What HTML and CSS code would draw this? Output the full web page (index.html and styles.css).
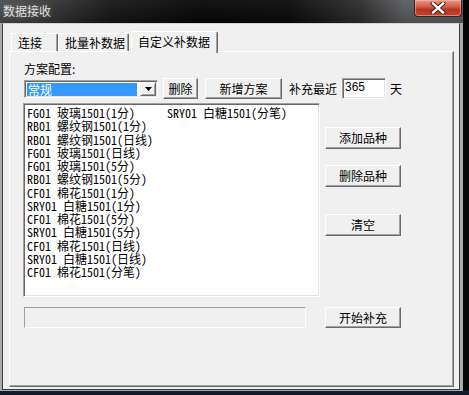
FILE: index.html
```html
<!DOCTYPE html>
<html lang="zh">
<head>
<meta charset="utf-8">
<title>数据接收</title>
<link rel="stylesheet" href="styles.css">
</head>
<body>
<div class="window">
  <div class="titlebar">
    <span class="title">数据接收</span>
    <div class="close">
      <svg width="16" height="12" viewBox="0 0 16 12">
        <path d="M3 1.5 L13 10.5 M13 1.5 L3 10.5" stroke="#3a1a14" stroke-width="4.2" stroke-linecap="square" fill="none"/>
        <path d="M3 1.5 L13 10.5 M13 1.5 L3 10.5" stroke="#ffffff" stroke-width="2.4" stroke-linecap="square" fill="none"/>
      </svg>
    </div>
  </div>
  <div class="client">
    <div class="tabs">
      <div class="tab tab-connect">连接</div>
      <div class="tab tab-batch">批量补数据</div>
      <div class="tab tab-custom active">自定义补数据</div>
    </div>
    <div class="panel">
      <div class="label">方案配置:</div>
      <div class="scheme-row">
        <div class="combo">
          <span class="combo-value">常规</span>
          <span class="combo-arrow">
            <svg width="7" height="4" viewBox="0 0 7 4"><path d="M0 0 H7 L3.5 4 Z" fill="#000"/></svg>
          </span>
        </div>
        <button class="btn btn-del">删除</button>
        <button class="btn btn-new">新增方案</button>
        <span class="text recent">补充最近</span>
        <div class="input">365</div>
        <span class="text day">天</span>
      </div>
      <div class="main">
        <div class="listbox">
          <div class="col">
            <div class="item">FG01 玻璃1501(1分)</div>
            <div class="item">RB01 螺纹钢1501(1分)</div>
            <div class="item">RB01 螺纹钢1501(日线)</div>
            <div class="item">FG01 玻璃1501(日线)</div>
            <div class="item">FG01 玻璃1501(5分)</div>
            <div class="item">RB01 螺纹钢1501(5分)</div>
            <div class="item">CF01 棉花1501(1分)</div>
            <div class="item">SRY01 白糖1501(1分)</div>
            <div class="item">CF01 棉花1501(5分)</div>
            <div class="item">SRY01 白糖1501(5分)</div>
            <div class="item">CF01 棉花1501(日线)</div>
            <div class="item">SRY01 白糖1501(日线)</div>
            <div class="item">CF01 棉花1501(分笔)</div>
          </div>
          <div class="col">
            <div class="item">SRY01 白糖1501(分笔)</div>
          </div>
        </div>
        <div class="side">
          <button class="btn side-btn add">添加品种</button>
          <button class="btn side-btn remove">删除品种</button>
          <button class="btn side-btn clear">清空</button>
        </div>
      </div>
      <div class="bottom">
        <div class="progress"></div>
        <button class="btn start">开始补充</button>
      </div>
    </div>
  </div>
</div>
</body>
</html>
```
FILE: styles.css
```css
* { box-sizing: border-box; }
html, body { margin: 0; padding: 0; }
body {
  width: 469px;
  height: 395px;
  overflow: hidden;
  background: linear-gradient(to bottom, #060606 0, #060606 390px, #142033 391px, #0d1624 395px);
  font-family: "Noto Sans Mono CJK SC", "Noto Sans CJK SC", sans-serif;
  font-size: 12px;
  color: #000;
}
.window {
  width: 463px;
  height: 391px;
  background: #a9abae;
  display: flex;
  flex-direction: column;
}
.titlebar {
  height: 23px;
  flex: none;
  display: flex;
  justify-content: space-between;
  align-items: flex-start;
  background:
    linear-gradient(to bottom, rgba(255,255,255,0.06), rgba(0,0,0,0.15)),
    linear-gradient(to right, #4a4b4d 0, #3a3a3b 40px, #161617 110px, #060606 200px, #0a0a0a 290px, #2c2c2d 360px, #5a5b5d 405px, #5a5b5d 463px);
}
.title {
  padding: 4px 0 0 3px;
  color: #e2e2e2;
  font-family: "Noto Sans CJK SC", sans-serif;
  font-size: 12px;
  line-height: 14px;
  text-shadow: 0 0 6px rgba(255,255,255,0.25);
}
.close {
  width: 48px;
  height: 17px;
  margin-right: 1px;
  border: 1px solid #3b2320;
  border-top: none;
  border-radius: 0 0 4px 4px;
  background: linear-gradient(to bottom, #e59a88 0, #d4604a 40%, #b8321e 60%, #c9462e 100%);
  box-shadow: inset 0 0 0 1px rgba(255,200,190,0.45);
  display: flex;
  align-items: center;
  justify-content: center;
}
.client {
  margin-left: 2px;
  width: 458px;
  height: 367px;
  flex: none;
  background: #f0f0f0;
  border: 1px solid #3c3c3c;
  border-top-color: #d4d4d4;
}
.tabs {
  height: 27px;
  padding: 7px 0 0 8px;
  display: flex;
  align-items: flex-end;
}
.tab {
  height: 18px;
  padding: 2px 0 0 6px;
  line-height: 14px;
  font-family: "Noto Sans CJK SC", sans-serif;
  border-top: 1px solid #ffffff;
  border-left: 1px solid #ffffff;
  border-right: 1px solid #696969;
  box-shadow: inset -1px 0 0 #a0a0a0;
  border-radius: 2px 2px 0 0;
  background: #f0f0f0;
}
.tab-connect { width: 47px; }
.tab-batch { width: 71px; }
.tab-custom {
  width: 87px;
  height: 22px;
  margin-left: 2px;
  margin-bottom: -2px;
  padding-top: 3px;
  position: relative;
  z-index: 1;
}
.panel {
  margin-left: 6px;
  width: 445px;
  height: 336px;
  border-top: 1px solid #ffffff;
  border-left: 1px solid #ffffff;
  border-right: 1px solid #696969;
  border-bottom: 1px solid #696969;
  box-shadow: inset -1px -1px 0 #a0a0a0;
  padding: 10px 0 0 14px;
}
.label, .text {
  font-family: "Noto Sans CJK SC", sans-serif;
  line-height: 14px;
}
.scheme-row {
  margin-top: 2px;
  height: 21px;
  display: flex;
  align-items: center;
}
.combo {
  width: 134px;
  height: 18px;
  background: #fff;
  border-top: 1px solid #a0a0a0;
  border-left: 1px solid #a0a0a0;
  border-right: 1px solid #ffffff;
  border-bottom: 1px solid #ffffff;
  box-shadow: inset 1px 1px 0 #696969, inset -1px -1px 0 #e3e3e3;
  padding: 2px 1px 1px 2px;
  display: flex;
  align-items: stretch;
}
.combo-value {
  width: 112px;
  background: #3399ff;
  color: #fff;
  font-family: "Noto Sans CJK SC", sans-serif;
  line-height: 13px;
  padding-left: 1px;
}
.combo-arrow {
  margin-left: 3px;
  margin-top: -1px;
  width: 16px;
  background: #f0f0f0;
  border-top: 1px solid #f0f0f0;
  border-left: 1px solid #f0f0f0;
  border-right: 1px solid #696969;
  border-bottom: 1px solid #696969;
  box-shadow: inset 1px 1px 0 #fff, inset -1px -1px 0 #a0a0a0;
  display: flex;
  align-items: center;
  justify-content: center;
}
.btn {
  margin: 0;
  padding: 0;
  height: 21px;
  background: #f0f0f0;
  border-top: 1px solid #ffffff;
  border-left: 1px solid #ffffff;
  border-right: 1px solid #696969;
  border-bottom: 1px solid #696969;
  box-shadow: inset -1px -1px 0 #a0a0a0;
  font-family: "Noto Sans CJK SC", sans-serif;
  font-size: 12px;
  line-height: 14px;
  color: #000;
  border-radius: 0;
}
.btn-del { margin-left: 5px; width: 35px; }
.btn-new { margin-left: 7px; width: 77px; }
.recent { margin-left: 7px; }
.input {
  margin-left: 5px;
  width: 44px;
  height: 21px;
  background: #fff;
  border-top: 1px solid #a0a0a0;
  border-left: 1px solid #a0a0a0;
  border-right: 1px solid #ffffff;
  border-bottom: 1px solid #ffffff;
  box-shadow: inset 1px 1px 0 #696969, inset -1px -1px 0 #e3e3e3;
  font-family: "Liberation Sans", sans-serif;
  font-size: 12px;
  line-height: 17px;
  padding-left: 2px;
}
.day { margin-left: 4px; }
.main {
  margin-top: 4px;
  display: flex;
  align-items: flex-start;
}
.listbox {
  margin-left: -1px;
  width: 297px;
  height: 194px;
  background: #fff;
  border-top: 1px solid #a0a0a0;
  border-left: 1px solid #a0a0a0;
  border-right: 1px solid #ffffff;
  border-bottom: 1px solid #ffffff;
  box-shadow: inset 1px 1px 0 #696969, inset -1px -1px 0 #e3e3e3;
  padding: 2px 0 0 3px;
  display: flex;
}
.col { width: 140px; }
.item {
  height: 13.25px;
  line-height: 13px;
  white-space: nowrap;
  font-size: 12px;
}
.side {
  margin-left: 5px;
  padding-top: 24px;
  display: flex;
  flex-direction: column;
}
.side-btn { width: 76px; height: 22px; }
.remove { margin-top: 16px; }
.clear { margin-top: 27px; }
.bottom {
  margin-top: 10px;
  display: flex;
  align-items: flex-start;
}
.progress {
  width: 282px;
  height: 21px;
  border-top: 1px solid #a0a0a0;
  border-left: 1px solid #a0a0a0;
  border-right: 1px solid #ffffff;
  border-bottom: 1px solid #ffffff;
  background: #f0f0f0;
}
.start { margin-left: 19px; width: 76px; height: 21px; }
```
